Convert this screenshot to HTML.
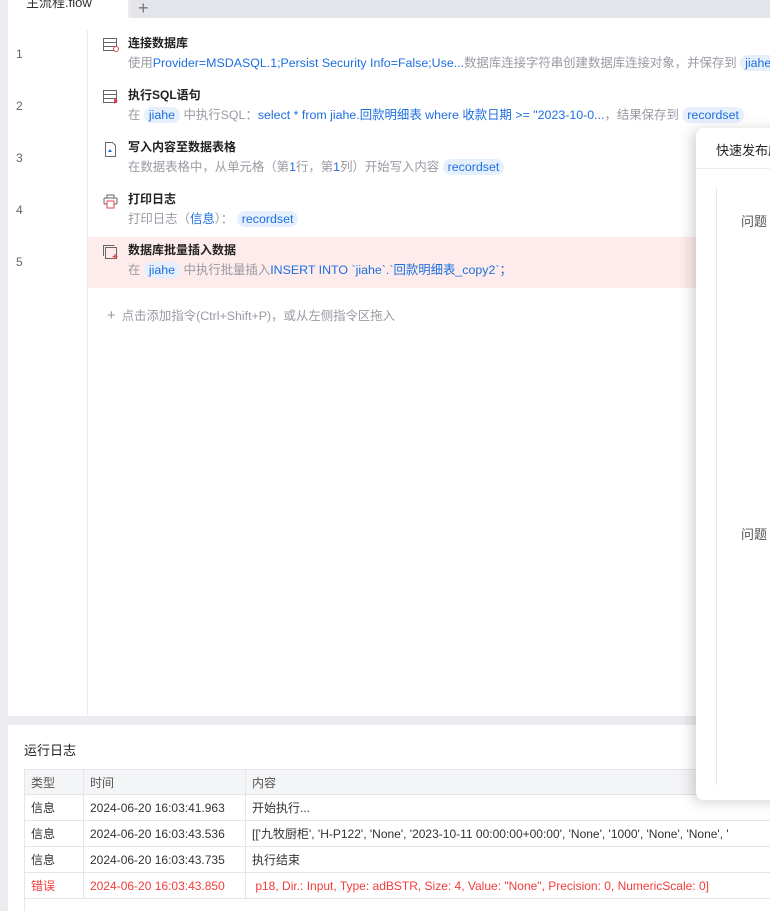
<!DOCTYPE html>
<html><head><meta charset="utf-8"><style>
*{box-sizing:border-box;margin:0;padding:0}
html,body{width:770px;height:911px;overflow:hidden}
body{background:#ebecf0;font-family:"Liberation Sans","Noto Sans CJK SC",sans-serif;position:relative;font-size:12px;color:#333}
.abs{position:absolute}
.tab{left:8px;top:-10px;width:120px;height:28px;background:#fff;font-size:13px;color:#333;padding:0 0 0 18px;line-height:26px}
.tabbar{left:130px;top:-10px;width:640px;height:30px;background:#e4e5ea;border-radius:0 0 0 6px}
.main{left:8px;top:18px;width:762px;height:698px;background:#fff}
.gut{left:87px;top:30px;width:1px;height:686px;background:#ececef}
.num{left:16px;color:#666;font-size:12px}
.row{left:88px;width:610px;height:52px}
.t{position:absolute;left:40px;top:4px;font-weight:bold;font-size:12px;color:#222}
.d{position:absolute;left:40px;top:23px;font-size:12.4px;color:#9a9aa2;white-space:nowrap}
.b{color:#1e6fe0}
.pill{background:#e6f0fd;color:#1e6fe0;border-radius:9px;padding:1px 5px}
.ic{position:absolute;left:15px;top:8px}
.dlg{left:696px;top:128px;width:90px;height:672px;background:#fff;border-radius:8px 0 0 8px;box-shadow:-4px 2px 14px rgba(0,0,0,.18)}
.log{left:8px;top:725px;width:762px;height:186px;background:#fff}
table{border-collapse:collapse;position:absolute;left:24px;top:769px;width:760px;font-size:12px}
td{border:1px solid #e6e6ea;height:26px;padding:0 6px;white-space:nowrap;color:#333}
tr.h td{background:#f4f5f7;color:#555;height:25px}
tr.e td{color:#f23c3c}
</style></head><body>
<div class="abs tab">主流程.flow</div>
<div class="abs tabbar"><span style="position:absolute;left:8px;top:8px;font-size:18px;color:#777">+</span></div>
<div class="abs main"></div>
<div class="abs gut"></div>
<div class="abs num" style="top:47px">1</div>
<div class="abs num" style="top:99px">2</div>
<div class="abs num" style="top:151px">3</div>
<div class="abs num" style="top:203px">4</div>
<div class="abs num" style="top:255px">5</div>

<div class="abs row" style="top:30px">
<svg class="ic" width="16" height="14" viewBox="0 0 16 14"><rect x="0.5" y="0.5" width="13" height="12" fill="none" stroke="#666"/><path d="M1 4.5h12M1 8.5h12" stroke="#666"/><circle cx="13" cy="11" r="2.5" fill="#fff" stroke="#e0454f"/></svg>
<div class="t">连接数据库</div>
<div class="d">使用<span class="b">Provider=MSDASQL.1;Persist Security Info=False;Use...</span>数据库连接字符串创建数据库连接对象，并保存到 <span class="pill">jiahe</span></div></div>
<div class="abs row" style="top:82px">
<svg class="ic" width="16" height="14" viewBox="0 0 16 14"><rect x="0.5" y="0.5" width="13" height="12" fill="none" stroke="#666"/><path d="M1 4.5h12M1 8.5h12" stroke="#666"/><path d="M11 8l4 3-4 3z" fill="#e0454f"/></svg>
<div class="t">执行SQL语句</div>
<div class="d">在 <span class="pill">jiahe</span> 中执行SQL：<span class="b">select * from jiahe.回款明细表 where 收款日期 &gt;= "2023-10-0...</span>，结果保存到 <span class="pill">recordset</span></div></div>
<div class="abs row" style="top:134px">
<svg class="ic" width="16" height="15" viewBox="0 0 16 15"><path d="M2.5 .5h7l3 3v11h-10z" fill="none" stroke="#666"/><path d="M5 10l2-3 2 3z" fill="#1e6fe0"/></svg>
<div class="t">写入内容至数据表格</div>
<div class="d">在数据表格中，从单元格（第<span class="b">1</span>行，第<span class="b">1</span>列）开始写入内容 <span class="pill">recordset</span></div></div>
<div class="abs row" style="top:186px">
<svg class="ic" width="16" height="15" viewBox="0 0 16 15"><rect x="4" y="1" width="7" height="3" fill="none" stroke="#666"/><rect x="1" y="4" width="13" height="6" rx="1" fill="none" stroke="#666"/><rect x="4" y="7" width="7" height="7" fill="#fff" stroke="#e0454f"/></svg>
<div class="t">打印日志</div>
<div class="d">打印日志（<span class="b">信息</span>）： <span class="pill">recordset</span></div></div>
<div class="abs row" style="top:237px;height:51px;background:#fdeceb">
<svg class="ic" width="16" height="15" viewBox="0 0 16 15"><rect x="2.5" y="2.5" width="11" height="11" fill="none" stroke="#666"/><path d="M.5 11V.5h11" fill="none" stroke="#666"/><path d="M12 9v5M9.5 11.5h5" stroke="#e0454f" stroke-width="1.3"/></svg>
<div class="t">数据库批量插入数据</div>
<div class="d">在 <span class="pill">jiahe</span> 中执行批量插入<span class="b">INSERT INTO `jiahe`.`回款明细表_copy2`；</span></div></div>
<div class="abs" style="left:107px;top:306px;font-size:12.4px;color:#9a9aa2"><span style="font-size:15px;margin-right:6px">+</span>点击添加指令(Ctrl+Shift+P)，或从左侧指令区拖入</div>

<div class="abs log"></div>
<div class="abs" style="left:24px;top:740px;font-size:13px;color:#222">运行日志</div>
<table>
<colgroup><col style="width:59px"><col style="width:162px"><col></colgroup>
<tr class="h"><td>类型</td><td>时间</td><td>内容</td></tr>
<tr><td>信息</td><td>2024-06-20 16:03:41.963</td><td>开始执行...</td></tr>
<tr><td>信息</td><td>2024-06-20 16:03:43.536</td><td>[['九牧厨柜', 'H-P122', 'None', '2023-10-11 00:00:00+00:00', 'None', '1000', 'None', 'None', '</td></tr>
<tr><td>信息</td><td>2024-06-20 16:03:43.735</td><td>执行结束</td></tr>
<tr class="e"><td>错误</td><td>2024-06-20 16:03:43.850</td><td>&nbsp;p18, Dir.: Input, Type: adBSTR, Size: 4, Value: "None", Precision: 0, NumericScale: 0]</td></tr>
</table>
<div class="abs" style="left:24px;top:898px;width:1px;height:13px;background:#e6e6ea"></div>

<div class="abs dlg">
<div style="position:absolute;left:20px;top:12px;font-size:13px;color:#222;white-space:nowrap">快速发布应</div>
<div style="position:absolute;left:0;top:40px;width:90px;height:1px;background:#eee"></div>
<div style="position:absolute;left:20px;top:60px;width:1px;height:597px;background:#e6e6ea"></div>
<div style="position:absolute;left:45px;top:83px;font-size:13px;color:#555;white-space:nowrap">问题</div>
<div style="position:absolute;left:45px;top:396px;font-size:13px;color:#555;white-space:nowrap">问题</div>
</div>
</body></html>
